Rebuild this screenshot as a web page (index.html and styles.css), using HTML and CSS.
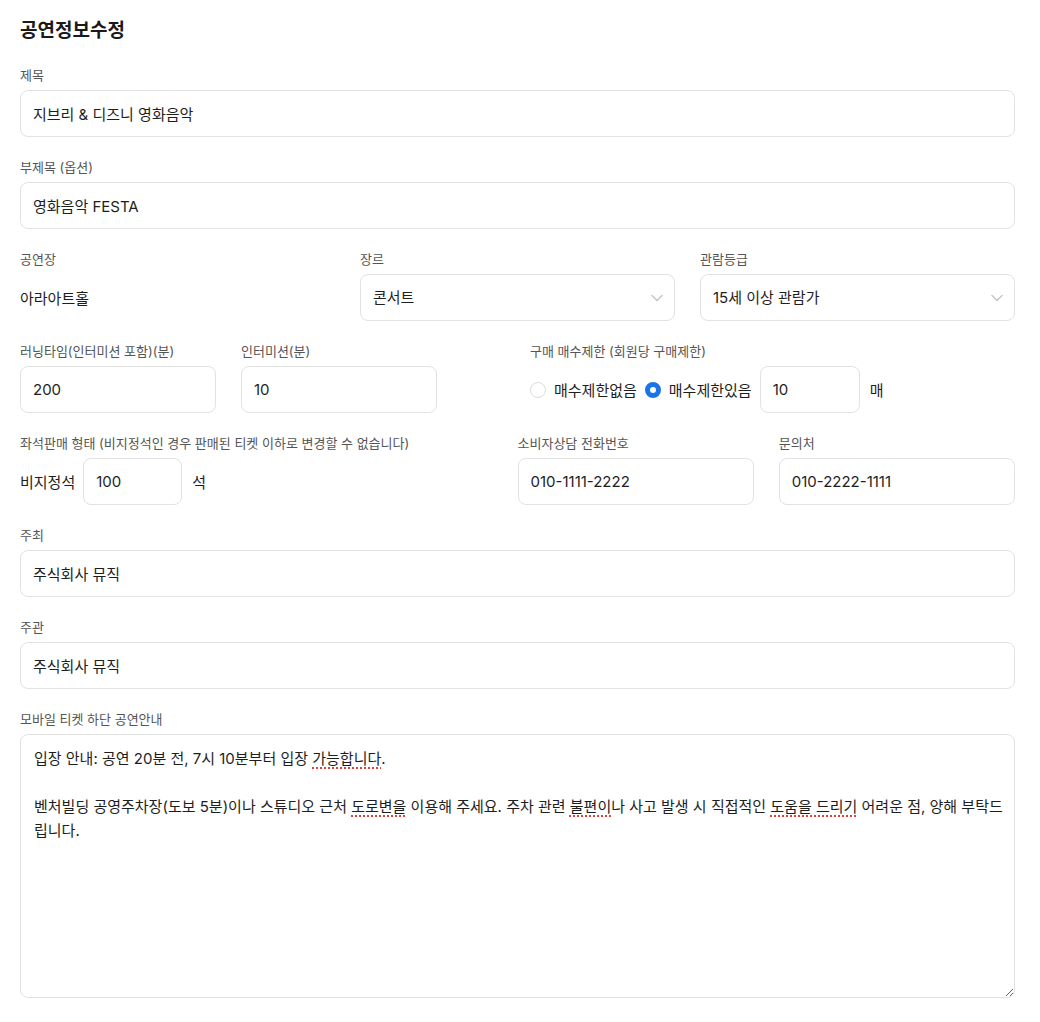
FILE: index.html
```html
<!DOCTYPE html>
<html lang="ko">
<head>
    <meta charset="UTF-8">
    <meta name="viewport" content="width=device-width, initial-scale=1.0">
    <title>공연정보수정</title>
    <link rel="stylesheet" href="styles.css">
</head>
<body>
    <div class="page">
        <h1 class="page-title">공연정보수정</h1>
        <form class="form" id="showForm">
            <div class="field">
                <label class="label" for="title">제목</label>
                <input class="input" id="title" type="text" value="지브리 &amp; 디즈니 영화음악">
            </div>
            <div class="field">
                <label class="label" for="subtitle">부제목 (옵션)</label>
                <input class="input" id="subtitle" type="text" value="영화음악 FESTA">
            </div>

            <div class="row row-thirds">
                <div class="field">
                    <span class="label">공연장</span>
                    <div class="static-value">아라아트홀</div>
                </div>
                <div class="field">
                    <label class="label" for="genre">장르</label>
                    <div class="select-wrap">
                        <select class="input select" id="genre">
                            <option>콘서트</option>
                            <option>뮤지컬</option>
                            <option>연극</option>
                        </select>
                        <svg class="chevron" width="12" height="8" viewBox="0 0 12 8"><path d="M1 1.5l5 5 5-5" fill="none" stroke="#c4c4c4" stroke-width="1.4" stroke-linecap="round" stroke-linejoin="round"/></svg>
                    </div>
                </div>
                <div class="field">
                    <label class="label" for="rating">관람등급</label>
                    <div class="select-wrap">
                        <select class="input select" id="rating">
                            <option>15세 이상 관람가</option>
                            <option>전체 관람가</option>
                        </select>
                        <svg class="chevron" width="12" height="8" viewBox="0 0 12 8"><path d="M1 1.5l5 5 5-5" fill="none" stroke="#c4c4c4" stroke-width="1.4" stroke-linecap="round" stroke-linejoin="round"/></svg>
                    </div>
                </div>
            </div>

            <div class="row row-time">
                <div class="field">
                    <label class="label" for="runtime">러닝타임(인터미션 포함)(분)</label>
                    <input class="input" id="runtime" type="text" value="200">
                </div>
                <div class="field">
                    <label class="label" for="intermission">인터미션(분)</label>
                    <input class="input" id="intermission" type="text" value="10">
                </div>
                <div class="field purchase">
                    <span class="label">구매 매수제한 (회원당 구매제한)</span>
                    <div class="inline-group">
                        <label class="radio-option">
                            <input class="radio" type="radio" name="limit">
                            <span>매수제한없음</span>
                        </label>
                        <label class="radio-option">
                            <input class="radio" type="radio" name="limit" checked>
                            <span>매수제한있음</span>
                        </label>
                        <input class="input input-small limit-count" type="text" value="10">
                        <span class="unit">매</span>
                    </div>
                </div>
            </div>

            <div class="row row-contact">
                <div class="field">
                    <span class="label">좌석판매 형태 (비지정석인 경우 판매된 티켓 이하로 변경할 수 없습니다)</span>
                    <div class="inline-group">
                        <span class="inline-text">비지정석</span>
                        <input class="input input-small seat-count" type="text" value="100">
                        <span class="unit">석</span>
                    </div>
                </div>
                <div class="field">
                    <label class="label" for="cs">소비자상담 전화번호</label>
                    <input class="input" id="cs" type="text" value="010-1111-2222">
                </div>
                <div class="field">
                    <label class="label" for="contact">문의처</label>
                    <input class="input" id="contact" type="text" value="010-2222-1111">
                </div>
            </div>

            <div class="field">
                <label class="label" for="host">주최</label>
                <input class="input" id="host" type="text" value="주식회사 뮤직">
            </div>
            <div class="field">
                <label class="label" for="organizer">주관</label>
                <input class="input" id="organizer" type="text" value="주식회사 뮤직">
            </div>
            <div class="field">
                <span class="label">모바일 티켓 하단 공연안내</span>
                <div class="textarea" contenteditable="true" spellcheck="false">입장 안내: 공연 20분 전, 7시 10분부터 입장 <span class="typo">가능합니다</span>.<br><br>벤처빌딩 공영주차장(도보 5분)이나 스튜디오 근처 <span class="typo">도로변을</span> 이용해 주세요. 주차 관련 <span class="typo">불편이</span>나 사고 발생 시 직접적인 <span class="typo">도움을 드리기</span> 어려운 점, 양해 부탁드립니다.</div>
            </div>
        </form>
    </div>
</body>
</html>
```

FILE: styles.css
```css
/* 공연정보수정 */
* {
    box-sizing: border-box;
}
body {
    margin: 0;
    padding: 0;
    background-color: #fff;
    color: #1e1e1e;
    font-family: Inter, "Noto Sans CJK KR", sans-serif;
}
.page {
    padding: 20px 25px 20px 20px;
}
.page-title {
    font-size: 19px;
    font-weight: 700;
    line-height: 22px;
    margin: 0 0 25px;
    color: #1a1a1a;
}
.form {
    display: flex;
    flex-direction: column;
    gap: 22px;
}
.field {
    display: flex;
    flex-direction: column;
    min-width: 0;
}
.label {
    font-size: 13px;
    line-height: 17px;
    color: #555;
    margin-bottom: 6px;
}
.input {
    width: 100%;
    height: 47px;
    padding: 0 12px;
    border: 1px solid #e2e2e2;
    border-radius: 8px;
    background-color: #fff;
    font-family: inherit;
    font-size: 15px;
    color: #1e1e1e;
    outline: none;
}
.row {
    display: grid;
    column-gap: 25px;
}
.row-thirds {
    grid-template-columns: 1fr 1fr 1fr;
}
.row-time {
    grid-template-columns: 196px 196px auto;
}
.row-contact {
    grid-template-columns: 2fr 1fr 1fr;
}
.static-value {
    height: 47px;
    display: flex;
    align-items: center;
    font-size: 15px;
}
.select-wrap {
    position: relative;
}
.select {
    appearance: none;
    -webkit-appearance: none;
    padding-right: 36px;
}
.chevron {
    position: absolute;
    right: 12px;
    top: 20px;
    pointer-events: none;
}
.purchase {
    margin-left: 68px;
}
.inline-group {
    display: flex;
    align-items: center;
    height: 47px;
    font-size: 15px;
}
.radio-option {
    display: flex;
    align-items: center;
    margin-right: 8px;
}
.radio {
    appearance: none;
    -webkit-appearance: none;
    width: 16px;
    height: 16px;
    margin: 0 8px 0 0;
    border: 1px solid #dcdcdc;
    border-radius: 50%;
    background-color: #fff;
}
.radio:checked {
    border: 5px solid #1a73e8;
}
.input-small {
    width: 98px;
}
.limit-count {
    width: 100px;
}
.seat-count {
    width: 99px;
    margin-left: 8px;
}
.unit {
    margin-left: 10px;
}
.inline-text {
    white-space: nowrap;
}
.textarea {
    height: 264px;
    padding: 12px 8px 12px 13px;
    border: 1px solid #e2e2e2;
    border-radius: 8px;
    font-size: 15px;
    line-height: 24px;
    color: #1e1e1e;
    overflow: auto;
    resize: vertical;
    outline: none;
}
.typo {
    text-decoration: underline dotted #e0413a;
    text-decoration-thickness: 1.5px;
    text-underline-offset: 3px;
}
```
